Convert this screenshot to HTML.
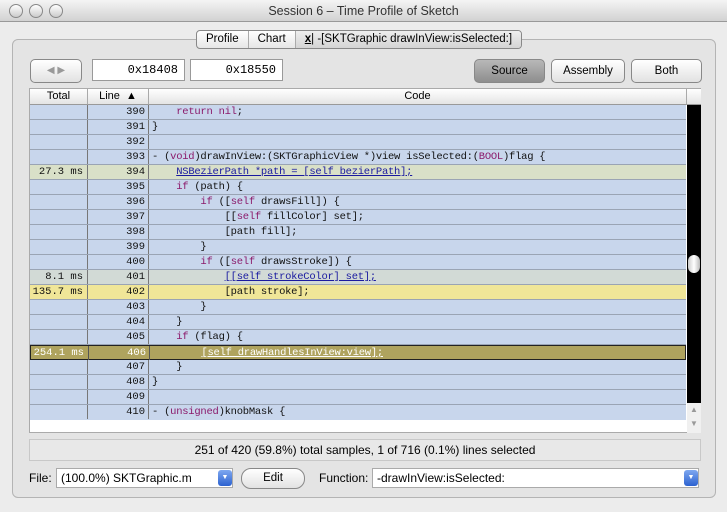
<!DOCTYPE html><html><head><style>
*{margin:0;padding:0;box-sizing:border-box}
body{width:727px;height:512px;background:#ececec;font-family:"Liberation Sans",sans-serif;position:relative;overflow:hidden}
.a{position:absolute}
.title{left:0;top:0;width:727px;height:22px;background:linear-gradient(#f4f4f4,#d2d2d2);border-bottom:1px solid #999;text-align:center;font-size:12.5px;line-height:22px;color:#333}
.light{top:4px;width:14px;height:14px;border-radius:50%;border:1px solid #888;background:linear-gradient(#fff,#ccc)}
.group{left:12px;top:39px;width:704px;height:459px;border:1px solid #b4b4b4;border-radius:6px;background:#e4e4e4}
.tabs{left:196px;top:30px;height:19px;display:flex;border:1px solid #888;border-radius:4px;background:linear-gradient(#fff,#e6e6e6);font-size:11.5px;line-height:17px;overflow:hidden}
.tabs div{padding:0 9px;border-right:1px solid #aaa}
.btn{height:24px;border:1px solid #888;border-radius:5px;background:linear-gradient(#fff,#e2e2e2);font-size:11.5px;text-align:center;line-height:22px}
.field{height:22px;border:1px solid #999;background:#fff;font-family:"Liberation Mono",monospace;font-size:12px;text-align:right;padding-right:6px;line-height:20px}
.table{left:29px;top:88px;width:672px;height:345px;background:#fff;border:1px solid #aaa}
.hdr{left:0;top:0;height:16px;background:linear-gradient(#fff,#e4e4e4);border-bottom:1px solid #999;border-right:1px solid #aaa;font-size:11px;text-align:center;line-height:15px}
.row{left:0;width:656px;height:15px;background:#c8d6ec;border-bottom:1px solid #9aa4b4;font-family:"Liberation Mono",monospace;font-size:10.5px;line-height:14px;color:#111}
.row span.t{position:absolute;left:0;width:58px;text-align:right;padding-right:4px;border-right:1px solid #777;height:14px}
.row span.l{position:absolute;left:58px;width:61px;text-align:right;padding-right:3px;border-right:1px solid #777;height:14px}
.row span.c{position:absolute;left:122px;white-space:pre;letter-spacing:-0.25px}
.k{color:#8b1a6b}.u{color:#1a1aa0;text-decoration:underline}
</style></head><body>
<div class="a title">Session 6 – Time Profile of Sketch</div>
<div class="a light" style="left:9px"></div><div class="a light" style="left:29px"></div><div class="a light" style="left:49px"></div>
<div class="a group"></div>
<div class="a tabs"><div>Profile</div><div>Chart</div><div style="background:linear-gradient(#eee,#d4d4d4);border:none"><u><b>x</b></u>| -[SKTGraphic drawInView:isSelected:]</div></div>
<div class="a btn" style="left:30px;top:59px;width:52px;color:#999;font-size:10px">◀ ▶</div>
<div class="a field" style="left:92px;top:59px;width:93px">0x18408</div>
<div class="a field" style="left:190px;top:59px;width:93px">0x18550</div>
<div class="a btn" style="left:474px;top:59px;width:71px;background:linear-gradient(#b8b8b8,#8e8e8e)">Source</div>
<div class="a btn" style="left:551px;top:59px;width:74px">Assembly</div>
<div class="a btn" style="left:631px;top:59px;width:71px">Both</div>
<div class="a table">
<div class="a hdr" style="width:58px">Total</div>
<div class="a hdr" style="left:58px;width:61px">Line &nbsp;▲</div>
<div class="a hdr" style="left:119px;width:538px">Code</div>
<div class="a hdr" style="left:657px;width:14px;border-right:none"></div>
<div class="a" style="left:657px;top:16px;width:14px;height:298px;background:#000"></div>
<div class="a" style="left:658px;top:166px;width:12px;height:18px;border-radius:6px;background:linear-gradient(90deg,#ccc,#fff,#bbb)"></div>
<div class="a" style="left:657px;top:314px;width:14px;height:30px;background:#f0f0f0;font-size:8px;color:#999;text-align:center;line-height:14px">▲<br>▼</div>
<div class="a row" style="top:16px"><span class="t"></span><span class="l">390</span><span class="c">    <span class="k">return nil</span>;</span></div>
<div class="a row" style="top:31px"><span class="t"></span><span class="l">391</span><span class="c">}</span></div>
<div class="a row" style="top:46px"><span class="t"></span><span class="l">392</span><span class="c"></span></div>
<div class="a row" style="top:61px"><span class="t"></span><span class="l">393</span><span class="c">- (<span class="k">void</span>)drawInView:(SKTGraphicView *)view isSelected:(<span class="k">BOOL</span>)flag {</span></div>
<div class="a row" style="top:76px;background:#d9e0c8"><span class="t">27.3 ms</span><span class="l">394</span><span class="c">    <span class="u">NSBezierPath *path = [self bezierPath];</span></span></div>
<div class="a row" style="top:91px"><span class="t"></span><span class="l">395</span><span class="c">    <span class="k">if</span> (path) {</span></div>
<div class="a row" style="top:106px"><span class="t"></span><span class="l">396</span><span class="c">        <span class="k">if</span> ([<span class="k">self</span> drawsFill]) {</span></div>
<div class="a row" style="top:121px"><span class="t"></span><span class="l">397</span><span class="c">            [[<span class="k">self</span> fillColor] set];</span></div>
<div class="a row" style="top:136px"><span class="t"></span><span class="l">398</span><span class="c">            [path fill];</span></div>
<div class="a row" style="top:151px"><span class="t"></span><span class="l">399</span><span class="c">        }</span></div>
<div class="a row" style="top:166px"><span class="t"></span><span class="l">400</span><span class="c">        <span class="k">if</span> ([<span class="k">self</span> drawsStroke]) {</span></div>
<div class="a row" style="top:181px;background:#d2dad6"><span class="t">8.1 ms</span><span class="l">401</span><span class="c">            <span class="u">[[self strokeColor] set];</span></span></div>
<div class="a row" style="top:196px;background:#f0e698"><span class="t">135.7 ms</span><span class="l">402</span><span class="c">            [path stroke];</span></div>
<div class="a row" style="top:211px"><span class="t"></span><span class="l">403</span><span class="c">        }</span></div>
<div class="a row" style="top:226px"><span class="t"></span><span class="l">404</span><span class="c">    }</span></div>
<div class="a row" style="top:241px"><span class="t"></span><span class="l">405</span><span class="c">    <span class="k">if</span> (flag) {</span></div>
<div class="a row" style="top:256px;background:#afa35e;color:#fff;border:1px solid #222"><span class="t" style="border-color:#555">254.1 ms</span><span class="l" style="border-color:#555">406</span><span class="c">        <span style="text-decoration:underline">[self drawHandlesInView:view];</span></span></div>
<div class="a row" style="top:271px"><span class="t"></span><span class="l">407</span><span class="c">    }</span></div>
<div class="a row" style="top:286px"><span class="t"></span><span class="l">408</span><span class="c">}</span></div>
<div class="a row" style="top:301px"><span class="t"></span><span class="l">409</span><span class="c"></span></div>
<div class="a row" style="top:316px;border-bottom:none"><span class="t"></span><span class="l">410</span><span class="c">- (<span class="k">unsigned</span>)knobMask {</span></div>
</div>
<div class="a" style="left:29px;top:439px;width:672px;height:22px;border:1px solid #c8c8c8;background:#e8e8e8;font-size:12px;text-align:center;line-height:21px">251 of 420 (59.8%) total samples, 1 of 716 (0.1%) lines selected</div>
<div class="a" style="left:29px;top:471px;font-size:12px">File:</div>
<div class="a" style="left:56px;top:468px;width:177px;height:20px;background:#fff;border:1px solid #aaa;font-size:12px;line-height:18px;padding-left:4px">(100.0%) SKTGraphic.m</div>
<div class="a" style="left:218px;top:470px;width:14px;height:16px;border-radius:3px;background:linear-gradient(#7fa8f0,#2c62d0);color:#fff;font-size:7px;text-align:center;line-height:16px">▼</div>
<div class="a btn" style="left:241px;top:468px;width:64px;height:21px;line-height:19px;border-radius:10px">Edit</div>
<div class="a" style="left:319px;top:471px;font-size:12px">Function:</div>
<div class="a" style="left:372px;top:468px;width:327px;height:20px;background:#fff;border:1px solid #aaa;font-size:12px;line-height:18px;padding-left:4px">-drawInView:isSelected:</div>
<div class="a" style="left:684px;top:470px;width:14px;height:16px;border-radius:3px;background:linear-gradient(#7fa8f0,#2c62d0);color:#fff;font-size:7px;text-align:center;line-height:16px">▼</div>
</body></html>
